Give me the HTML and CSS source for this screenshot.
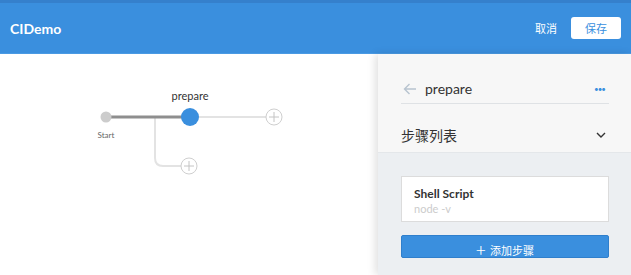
FILE: index.html
```html
<!DOCTYPE html>
<html>
<head>
    <meta charset="UTF-8">
    <title>CIDemo</title>
    <link rel="stylesheet" href="styles.css">
</head>
<body>
    <header class="topbar">
        <div class="brand">CIDemo</div>
        <div class="actions">
            <a class="cancel">取消</a>
            <button class="save">保存</button>
        </div>
    </header>

    <div class="main">
        <div class="canvas">
            <svg class="graph" width="377" height="221" viewBox="0 54 377 221">
                <!-- branch -->
                <path d="M155 117 V158 Q155 166 163 166 H181" fill="none" stroke="#e3e3e3" stroke-width="2"/>
                <line x1="199" y1="117" x2="266" y2="117" stroke="#e3e3e3" stroke-width="2"/>
                <line x1="106" y1="117" x2="190" y2="117" stroke="#8e8e8e" stroke-width="3"/>
                <circle cx="106" cy="117" r="5.5" fill="#cccccc"/>
                <circle cx="190" cy="117" r="9" fill="#3a8fde"/>
                <g fill="#fff" stroke="#cfcfcf" stroke-width="1">
                    <circle cx="274" cy="117" r="8"/>
                    <circle cx="189" cy="166" r="8"/>
                </g>
                <g stroke="#c4c4c4" stroke-width="1">
                    <path d="M274 112 V122 M269 117 H279"/>
                    <path d="M189 161 V171 M184 166 H194"/>
                </g>
                <text x="190" y="100" class="node-label" text-anchor="middle">prepare</text>
                <text x="106" y="138" class="start-label" text-anchor="middle">Start</text>
            </svg>
        </div>

        <aside class="panel">
            <div class="panel-head">
                <div class="title-row">
                    <svg class="back" width="14" height="12" viewBox="0 0 14 12">
                        <path d="M13 6 H1.5 M6.5 1 L1.5 6 L6.5 11" fill="none" stroke="#b8c4d0" stroke-width="1.4"/>
                    </svg>
                    <span class="stage-name">prepare</span>
                    <span class="more">&bull;&bull;&bull;</span>
                </div>
                <div class="section-row">
                    <span>步骤列表</span>
                    <svg width="10" height="7" viewBox="0 0 10 7">
                        <path d="M1 1 L5 5 L9 1" fill="none" stroke="#333" stroke-width="1.4"/>
                    </svg>
                </div>
            </div>
            <div class="panel-body">
                <div class="step-card">
                    <div class="step-title">Shell Script</div>
                    <div class="step-cmd">node -v</div>
                </div>
                <button class="add-step"><span class="plus">+</span> 添加步骤</button>
            </div>
        </aside>
    </div>
</body>
</html>
```

FILE: styles.css
```css
body {
    margin: 0;
    padding: 0;
    font-family: Lato, "Noto Sans CJK SC", sans-serif;
    background-color: #fff;
    width: 631px;
    height: 275px;
    overflow: hidden;
}

.topbar {
    height: 50px;
    border-top: 3px solid #3580cc;
    border-bottom: 1px solid #4a9ae3;
    background-color: #3a8fde;
    display: flex;
    align-items: center;
    justify-content: space-between;
    padding: 0 10px;
}

.brand {
    color: #fff;
    font-size: 14px;
    font-weight: bold;
}

.actions {
    display: flex;
    align-items: center;
    gap: 14px;
}

.cancel {
    color: #fff;
    font-size: 11px;
}

.save {
    width: 50px;
    height: 22px;
    background-color: #fff;
    color: #3a8fde;
    border: none;
    border-radius: 3px;
    font-family: "Noto Sans CJK SC", sans-serif;
    font-size: 11px;
    padding: 0;
}

.main {
    display: flex;
    height: 221px;
}

.canvas {
    flex: 1;
    background-color: #fff;
}

.graph {
    display: block;
}

.node-label {
    font-family: Lato, sans-serif;
    font-size: 11px;
    fill: #333;
}

.start-label {
    font-family: Lato, sans-serif;
    font-size: 8px;
    fill: #666;
}

.panel {
    width: 253px;
    display: flex;
    flex-direction: column;
    box-shadow: -3px 0 8px rgba(0, 0, 0, 0.12);
    position: relative;
}

.panel-head {
    background-color: #f7f7f7;
    padding: 22px 22px 0 23px;
    height: 76px;
    border-bottom: 1px solid #e4e7ea;
}

.title-row {
    display: flex;
    align-items: center;
    height: 25px;
    padding-bottom: 2px;
    border-bottom: 1px solid #dfe2e5;
}

.back {
    margin: 0 8px 0 2px;
}

.stage-name {
    flex: 1;
    font-size: 14px;
    color: #333;
}

.more {
    color: #3a8fde;
    font-size: 8px;
    letter-spacing: -1px;
    margin-right: 4px;
}

.section-row {
    display: flex;
    align-items: center;
    justify-content: space-between;
    margin-top: 21px;
    padding-right: 3px;
    font-size: 14px;
    color: #333;
}

.panel-body {
    flex: 1;
    background-color: #eceff2;
    padding: 23px 22px 0 23px;
}

.step-card {
    background-color: #fff;
    border: 1px solid #dcdcdc;
    height: 43px;
    padding: 3px 12px 0;
    box-sizing: border-box;
    height: 46px;
    display: flex;
    flex-direction: column;
    justify-content: center;
}

.step-title {
    font-size: 12px;
    font-weight: bold;
    color: #333;
}

.step-cmd {
    font-size: 11px;
    color: #ccc;
    margin-top: 1px;
}

.add-step {
    margin-top: 13px;
    width: 100%;
    height: 23px;
    background-color: #3a8fde;
    border: 1px solid #2f7fcc;
    border-radius: 2px;
    color: #fff;
    font-family: "Noto Sans CJK SC", sans-serif;
    font-size: 11px;
    padding: 0;
}

.plus {
    font-size: 18px;
    font-weight: 300;
    vertical-align: -2px;
    margin-right: 2px;
}
```
